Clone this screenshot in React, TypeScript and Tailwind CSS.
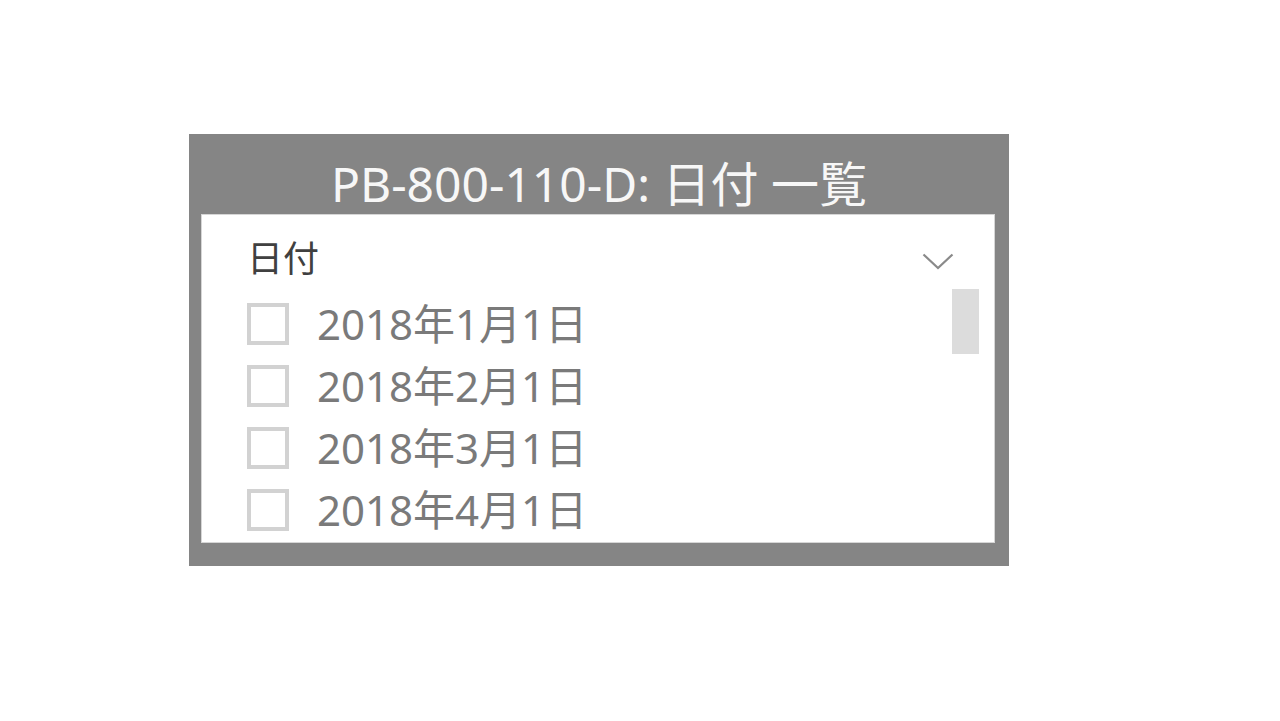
import React from 'react';

const dates = ['2018年1月1日', '2018年2月1日', '2018年3月1日', '2018年4月1日'];

const font = { fontFamily: '"Noto Sans", "Noto Sans CJK JP", sans-serif' };

export default function App() {
  return (
    <div className="w-[1280px] h-[721px] bg-white" style={font}>
      <div className="pt-[134px] pl-[189px]">
        <div className="w-[820px] h-[432px] bg-[#858585] flex flex-col">
          {/* title */}
          <div className="h-[80px] shrink-0 flex items-center justify-center pt-[20px]">
            <h1 className="text-[48px] leading-none text-[#f7f7f7] tracking-normal whitespace-nowrap">
              PB-800-110-D: 日付 一覧
            </h1>
          </div>

          {/* slicer body */}
          <div className="relative ml-[12px] mr-[14px] h-[329px] bg-white border border-[#d6d6d6] pl-[45px] pr-[40px] pt-[14px] overflow-hidden">
            <div className="h-[60px] flex items-center justify-between">
              <span className="text-[36px] leading-none text-[#404040]">日付</span>
              <svg width="32" height="17" viewBox="0 0 32 17" fill="none" className="mt-[4px]">
                <path d="M1.5 1.5 L16 15 L30.5 1.5" stroke="#8a8a8a" strokeWidth="2.2" />
              </svg>
            </div>

            <ul className="mt-[4px] flex flex-col">
              {dates.map(d => (
                <li key={d} className="h-[62px] flex items-center">
                  <span className="w-[42px] h-[42px] shrink-0 border-[4px] border-[#d2d2d2] bg-white" />
                  <span className="ml-[28px] text-[42px] leading-none text-[#7a7a7a] whitespace-nowrap">{d}</span>
                </li>
              ))}
            </ul>

            {/* scrollbar thumb */}
            <div className="absolute top-[74px] right-[15px] w-[27px] h-[65px] bg-[#dcdcdc]" />
          </div>
        </div>
      </div>
    </div>
  );
}
